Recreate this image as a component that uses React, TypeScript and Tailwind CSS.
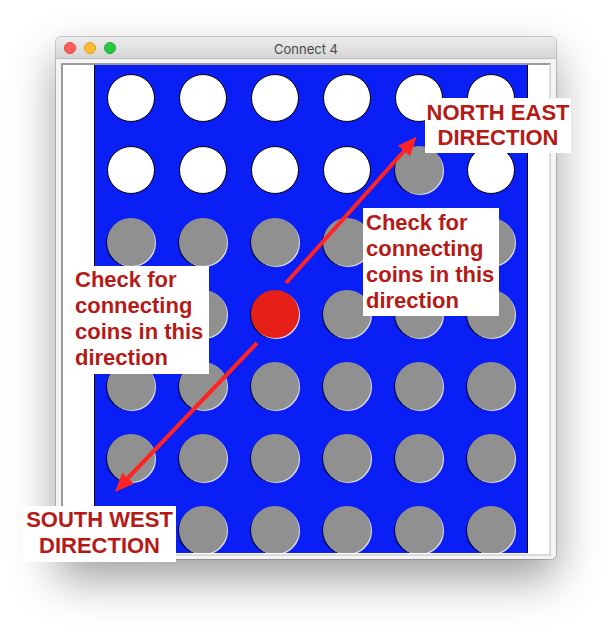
const rows = [
    'wwwwww',
    'wwwwgw',
    'gggggg',
    'ggrggg',
    'gggggg',
    'gggggg',
    'gggggg',
]

function Coin({ kind }: { kind: string }) {
    if (kind === 'w') {
        return <div className="w-[48px] h-[48px] rounded-full bg-white border border-black" />
    }
    if (kind === 'r') {
        return (
            <div className="w-[48px] h-[48px] rounded-full bg-[#e61f19] shadow-[1px_1px_0_rgba(255,255,255,0.85),-1px_1px_0_rgba(0,0,0,0.75)]" />
        )
    }
    return (
        <div className="w-[48px] h-[48px] rounded-full bg-[#909090] shadow-[1px_1px_0_rgba(255,255,255,0.85),-1px_1px_0_rgba(0,0,0,0.75)]" />
    )
}

function Label({ className, lines }: { className: string; lines: string[] }) {
    return (
        <div
            className={`absolute bg-white font-bold text-[22px] text-[#b51a17] ${className}`}
            style={{ fontFamily: '"Liberation Sans", Arial, sans-serif' }}
        >
            {lines.map((line) => (
                <div key={line}>{line}</div>
            ))}
        </div>
    )
}

function Arrows() {
    return (
        <svg className="absolute left-0 top-0 pointer-events-none" width="612" height="634" viewBox="0 0 612 634">
            <line x1="286" y1="283" x2="405" y2="150" stroke="#ff2424" strokeWidth="4" />
            <polygon points="416.7,136.7 410.1,156.2 398.1,145.6" fill="#ff2424" />
            <line x1="257" y1="343" x2="127" y2="479" stroke="#ff2424" strokeWidth="4" />
            <polygon points="115,492 122.3,472.7 133.9,483.7" fill="#ff2424" />
        </svg>
    )
}

export default function App() {
    return (
        <div className="relative w-[612px] h-[634px] bg-white overflow-hidden pt-[37px] pl-[56px]">
            <div className="w-[500px] h-[522px] rounded-[5px] flex flex-col overflow-hidden shadow-[0_0_0_1px_rgba(0,0,0,0.18),0_20px_45px_rgba(0,0,0,0.38)]">
                <div className="h-[22px] shrink-0 grid grid-cols-[1fr_auto_1fr] items-center bg-gradient-to-b from-[#ececec] to-[#d6d6d6] border-b border-[#bdbdbd]">
                    <div className="flex items-center gap-[8px] pl-[8px] pt-[1px]">
                        <span className="w-[12px] h-[12px] rounded-full bg-[#fe5f57] border border-[#e2463f]" />
                        <span className="w-[12px] h-[12px] rounded-full bg-[#febc2e] border border-[#dfa023]" />
                        <span className="w-[12px] h-[12px] rounded-full bg-[#28c840] border border-[#1fab31]" />
                    </div>
                    <div
                        className="text-[13px] text-[#4a4a4a] leading-none pt-[3px]"
                        style={{ fontFamily: 'Inter, "Liberation Sans", sans-serif' }}
                    >
                        Connect 4
                    </div>
                    <div />
                </div>
                <div className="flex-1 bg-[#f4f4f4] pt-[4px] px-[5px] pb-[3px]">
                    <div className="h-[493px] flex bg-white border-t-2 border-l-2 border-t-[#9c9c9c] border-l-[#9c9c9c] border-r-2 border-b-2 border-r-[#dadada] border-b-[#dadada]">
                        <div className="w-[31px] shrink-0" />
                        <div className="w-[434px] h-[488px] shrink-0 border-x border-black bg-[#0a1ff5] overflow-hidden grid grid-cols-[repeat(6,72px)] auto-rows-[48px] gap-y-[24px] pt-[9px] justify-items-center">
                            {rows.map((row, r) =>
                                row.split('').map((kind, c) => <Coin key={`${r}-${c}`} kind={kind} />)
                            )}
                        </div>
                        <div className="flex-1" />
                    </div>
                </div>
            </div>

            <Arrows />

            <Label
                className="left-[425px] top-[98px] w-[146px] pt-[2px] pb-[3px] text-center leading-[25px]"
                lines={['NORTH EAST', 'DIRECTION']}
            />
            <Label
                className="left-[363px] top-[208px] w-[136px] pt-[2px] pb-[2px] pl-[3px] leading-[26px]"
                lines={['Check for', 'connecting', 'coins in this', 'direction']}
            />
            <Label
                className="left-[68px] top-[266px] w-[141px] pt-[1px] pb-[3px] pl-[7px] leading-[26px]"
                lines={['Check for', 'connecting', 'coins in this', 'direction']}
            />
            <Label
                className="left-[23px] top-[506px] w-[153px] pt-[1px] pb-[3px] text-center leading-[26px]"
                lines={['SOUTH WEST', 'DIRECTION']}
            />
        </div>
    )
}
